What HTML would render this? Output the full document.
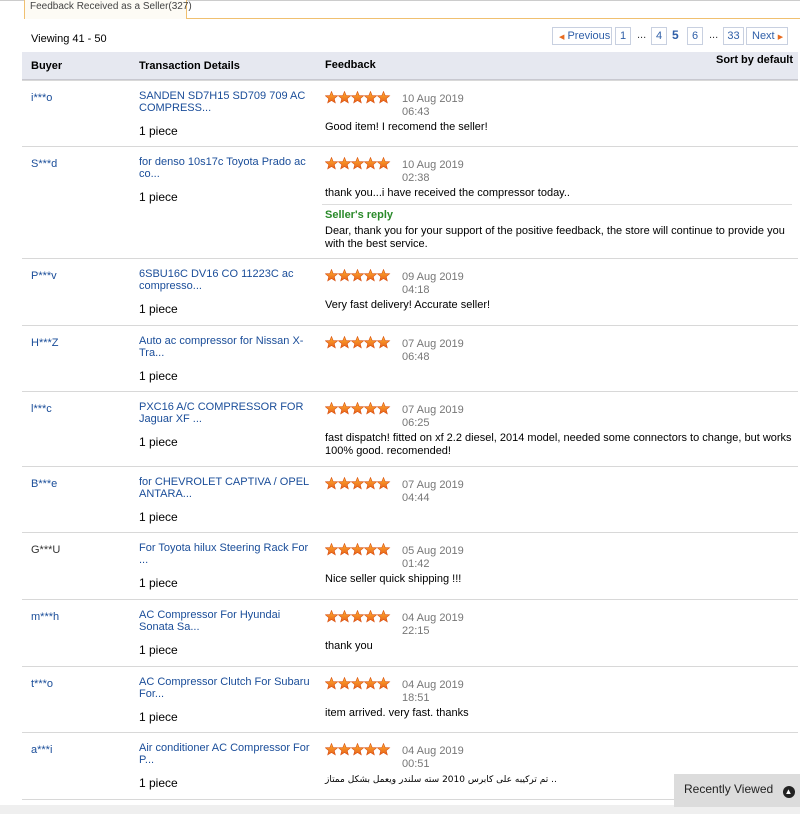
<!DOCTYPE html>
<html><head><meta charset="utf-8"><style>
*{margin:0;padding:0;box-sizing:border-box}
body{width:800px;height:814px;position:relative;overflow:hidden;background:#fff;font-family:"Liberation Sans",Arial,sans-serif;font-size:11px;color:#000}
.a{position:absolute;white-space:nowrap}
.l{color:#1a4d99}
.g{color:#777}
.line{position:absolute;left:22px;width:776px;height:1px;background:#d8d8d8}
.pg{position:absolute;top:27px;height:18px;border:1px solid #c8d0e0;color:#2f5fa8;font-size:11px;line-height:16px;text-align:center;background:#fff}
</style></head><body>
<div class="a" style="left:0;top:0;width:800px;height:1px;background:#ccc"></div>
<div class="a" style="left:24px;top:0;width:163px;height:19px;border:1px solid #f0c070;border-top:none;border-bottom:none;background:#fdfbf5;font-size:10px;line-height:14px;padding-left:5px;color:#444">Feedback Received as a Seller(327)</div>
<div class="a" style="left:186px;top:18px;width:614px;height:1px;background:#f0c070"></div>
<div class="a" style="left:31px;top:33px;font-size:11px">Viewing 41 - 50</div>
<div class="pg" style="left:552px;width:60px;text-align:left;padding-left:6px"><span style="color:#e86b1f;font-size:7px">◀</span> Previous</div>
<div class="pg" style="left:615px;width:16px">1</div>
<div class="a" style="left:637px;top:29px;color:#333">...</div>
<div class="pg" style="left:651px;width:16px">4</div>
<div class="a" style="left:672px;top:28px;color:#2f5fa8;font-weight:bold;font-size:12px">5</div>
<div class="pg" style="left:687px;width:16px">6</div>
<div class="a" style="left:709px;top:29px;color:#333">...</div>
<div class="pg" style="left:723px;width:21px">33</div>
<div class="pg" style="left:746px;width:42px;text-align:left;padding-left:5px">Next <span style="color:#e86b1f;font-size:7px">▶</span></div>
<div class="a" style="left:22px;top:52px;width:776px;height:28px;background:#e6e8f0;border-bottom:1px solid #c8c8d0"></div>
<div class="a" style="left:31px;top:60px;font-weight:bold">Buyer</div>
<div class="a" style="left:139px;top:60px;font-weight:bold">Transaction Details</div>
<div class="a" style="left:325px;top:59px;font-weight:bold">Feedback</div>
<div class="a" style="left:716px;top:54px;font-weight:bold">Sort by default</div>
<svg width="0" height="0" style="position:absolute"><defs><linearGradient id="sg" x1="0" y1="0" x2="0" y2="1"><stop offset="0" stop-color="#ffb030"/><stop offset="1" stop-color="#e8601a"/></linearGradient><g id="st"><polygon points="6.5,0.5 8.2,4.6 12.6,4.8 9.2,7.6 10.3,11.9 6.5,9.5 2.7,11.9 3.8,7.6 0.4,4.8 4.8,4.6" fill="url(#sg)" stroke="#d85010" stroke-width="0.6"/></g></defs></svg>
<div id="rows"></div>
<script>
var R=[[80,"i***o","SANDEN SD7H15 SD709 709 AC","COMPRESS...","10 Aug 2019","06:43","Good item! I recomend the seller!"],
[146,"S***d","for denso 10s17c Toyota Prado ac","co...","10 Aug 2019","02:38","thank you...i have received the compressor today..",1],
[258,"P***v","6SBU16C DV16 CO 11223C ac","compresso...","09 Aug 2019","04:18","Very fast delivery! Accurate seller!"],
[325,"H***Z","Auto ac compressor for Nissan X-","Tra...","07 Aug 2019","06:48",""],
[391,"l***c","PXC16 A/C COMPRESSOR FOR","Jaguar XF ...","07 Aug 2019","06:25","fast dispatch! fitted on xf 2.2 diesel, 2014 model, needed some connectors to change, but works<br>100% good. recomended!"],
[466,"B***e","for CHEVROLET CAPTIVA / OPEL","ANTARA...","07 Aug 2019","04:44",""],
[532,"G***U","For Toyota hilux Steering Rack For","...","05 Aug 2019","01:42","Nice seller quick shipping !!!"],
[599,"m***h","AC Compressor For Hyundai","Sonata Sa...","04 Aug 2019","22:15","thank you"],
[666,"t***o","AC Compressor Clutch For Subaru","For...","04 Aug 2019","18:51","item arrived. very fast. thanks"],
[732,"a***i","Air conditioner AC Compressor For","P...","04 Aug 2019","00:51","<span dir='ltr' style='font-family:\"DejaVu Sans\",sans-serif;font-size:9px'>تم تركيبه على كابرس 2010 سته سلندر ويعمل بشكل ممتاز ..</span>"]];
var h="";
R.forEach(function(r){var t=r[0];
h+='<div class="line" style="top:'+t+'px"></div>';
h+='<div class="a" style="left:31px;top:'+(t+12)+'px;color:'+(r[1]=="G***U"?"#333":"#1a4d99")+'">'+r[1]+'</div>';
h+='<div class="a l" style="left:139px;top:'+(t+10)+'px;line-height:12px">'+r[2]+'<br>'+r[3]+'</div>';
h+='<div class="a" style="left:139px;top:'+(t+44)+'px;font-size:12px">1 piece</div>';
var s='<svg class="a" style="left:325px;top:'+(t+11)+'px" width="66" height="13">';for(var i=0;i<5;i++)s+='<use href="#st" x="'+(i*13)+'"/>';s+='</svg>';h+=s;
h+='<div class="a g" style="left:402px;top:'+(t+13)+'px;line-height:13px">'+r[4]+'<br>'+r[5]+'</div>';
if(r[6])h+='<div class="a" style="left:325px;top:'+(t+41)+'px;line-height:13px">'+r[6]+'</div>';
if(r[7]){h+='<div class="a" style="left:322px;top:'+(t+58)+'px;width:470px;height:1px;background:#ddd"></div>';
h+='<div class="a" style="left:325px;top:'+(t+63)+'px;color:#2a8a2a;font-weight:bold">Seller\'s reply</div>';
h+='<div class="a" style="left:325px;top:'+(t+79)+'px;line-height:13px">Dear, thank you for your support of the positive feedback, the store will continue to provide you<br>with the best service.</div>';}
});
h+='<div class="line" style="top:799px"></div>';
document.getElementById("rows").innerHTML=h;
</script>
<div class="a" style="left:0;top:805px;width:800px;height:9px;background:#efefef"></div>
<div class="a" style="left:674px;top:774px;width:126px;height:33px;background:#dcdcdc;font-size:12px;line-height:30px;padding-left:10px;color:#222">Recently Viewed <span style="display:inline-block;width:12px;height:12px;border-radius:50%;background:#222;color:#fff;font-size:8px;line-height:12px;text-align:center;vertical-align:-1px;margin-left:6px">▲</span></div>
</body></html>
